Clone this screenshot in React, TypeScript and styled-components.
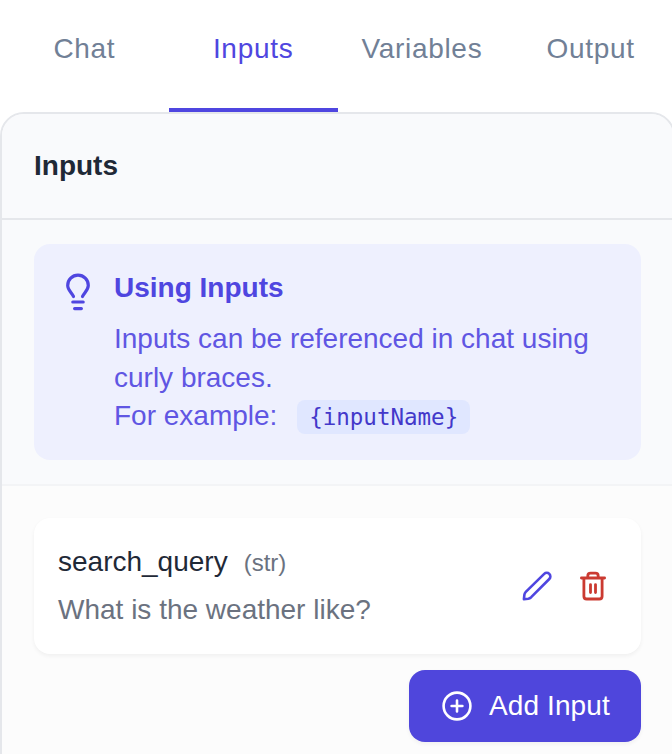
import React from "react";
import styled, { createGlobalStyle } from "styled-components";

const GlobalStyle = createGlobalStyle`
  *, *::before, *::after { box-sizing: border-box; }
  html, body { margin: 0; padding: 0; height: 100%; overflow: hidden; background: #fff; }
  body { font-family: "Liberation Sans", Arial, sans-serif; font-size: 28px; }
`;

const Page = styled.div`
  display: flex;
  flex-direction: column;
  width: 675px;
  height: 754px;
  overflow: hidden;
`;

const TabBar = styled.nav`
  display: grid;
  grid-template-columns: repeat(4, 168.75px);
  height: 112px;
  flex: none;
`;

const Tab = styled.button<{ $active?: boolean }>`
  border: 0;
  border-bottom: 4px solid ${(p) => (p.$active ? "#4f46e0" : "transparent")};
  padding: 0 0 10px;
  background: transparent;
  font: inherit;
  line-height: 40px;
  letter-spacing: 0.7px;
  color: ${(p) => (p.$active ? "#4f46e0" : "#718096")};
`;

const Panel = styled.section`
  flex: none;
  height: 700px;
  border: 2px solid #e5e7eb;
  border-radius: 24px;
  background: #fcfcfc;
  overflow: hidden;
`;

const PanelHeader = styled.header`
  display: flex;
  align-items: center;
  height: 106px;
  padding: 0 32px;
  border-bottom: 2px solid #e5e7eb;
  background: #f9fafc;
`;

const PanelTitle = styled.h2`
  margin: 0;
  font-size: 28px;
  line-height: 40px;
  font-weight: 700;
  color: #1f2937;
`;

const HintArea = styled.div`
  padding: 24px 32px;
  border-bottom: 2px solid #f3f4f6;
  background: #f9fafc;
`;

const Hint = styled.div`
  display: flex;
  gap: 16px;
  height: 216px;
  padding: 24px;
  border-radius: 16px;
  background: #eef0fe;
`;

const HintIcon = styled.svg`
  flex: none;
  width: 40px;
  height: 48px;
`;

const HintTitle = styled.h3`
  margin: 0 0 12px;
  font-size: 28px;
  line-height: 40px;
  font-weight: 700;
  color: #4f46e0;
`;

const HintText = styled.p`
  margin: 0;
  font-size: 28px;
  line-height: 38.5px;
  color: #6056e3;
`;

const Code = styled.code`
  display: inline-block;
  height: 34px;
  margin-left: 12px;
  padding: 0 12px;
  border-radius: 8px;
  background: #e0e7ff;
  font-family: "DejaVu Sans Mono", monospace;
  font-size: 22.5px;
  line-height: 34px;
  color: #4338ca;
`;

const List = styled.div`
  display: flex;
  flex-direction: column;
  align-items: flex-end;
  gap: 16px;
  padding: 32px;
`;

const Card = styled.article`
  display: flex;
  align-items: center;
  justify-content: space-between;
  width: 100%;
  height: 136px;
  padding: 0 32px 0 24px;
  border-radius: 16px;
  background: #fff;
  box-shadow: 0 2px 4px rgba(0, 0, 0, 0.05);
`;

const NameRow = styled.div`
  display: flex;
  align-items: baseline;
  gap: 16px;
  line-height: 40px;
  margin-bottom: 8px;
`;

const Name = styled.span`
  color: #1f2937;
`;

const TypeLabel = styled.span`
  font-size: 24px;
  color: #6b7280;
`;

const Value = styled.div`
  line-height: 38px;
  padding-bottom: 2px;
  color: #6b7280;
`;

const Actions = styled.div`
  display: flex;
  gap: 24px;
`;

const IconButton = styled.button<{ $danger?: boolean }>`
  display: flex;
  border: 0;
  padding: 0;
  background: transparent;
  color: ${(p) => (p.$danger ? "#cb3a31" : "#4f46e0")};
`;

const AddButton = styled.button`
  display: flex;
  align-items: center;
  gap: 16px;
  width: 232px;
  height: 72px;
  padding: 0 0 0 32px;
  border: 0;
  border-radius: 16px;
  background: #4f46dc;
  color: #fff;
  font: inherit;
  letter-spacing: 0.1px;
  box-shadow: 0 2px 4px rgba(0, 0, 0, 0.05);
`;

const stroke = {
  fill: "none",
  stroke: "currentColor",
  strokeLinecap: "round" as const,
  strokeLinejoin: "round" as const,
};

const PencilIcon = () => (
  <svg width="32" height="32" viewBox="0 0 32 32" {...stroke} strokeWidth="2.6">
    <path d="M2.9 29.1 3.4 24.6Q3.6 23 4.8 21.8L23.2 3.9a3.6 3.6 0 0 1 5.1 5.1L10.2 27.2Q8.8 28.5 7.2 28.7Z" />
  </svg>
);

const TrashIcon = () => (
  <svg width="32" height="32" viewBox="0 0 32 32" {...stroke} strokeWidth="2.8">
    <path d="M4.4 8h23.2M10.8 8V6q0-2.8 2.8-2.8h4.8q2.8 0 2.8 2.8V8M6.9 8v18.2q0 2.8 2.8 2.8h12.6q2.8 0 2.8-2.8V8M13.5 14.6v8M18.5 14.6v8" />
  </svg>
);

const PlusCircleIcon = () => (
  <svg width="32" height="32" viewBox="0 0 32 32" {...stroke} strokeWidth="2.6">
    <circle cx="16" cy="16" r="13.4" />
    <path d="M10.6 16h10.8M16 10.6v10.8" />
  </svg>
);

const tabs = ["Chat", "Inputs", "Variables", "Output"];

export default function App() {
  return (
    <>
      <GlobalStyle />
      <Page>
        <TabBar>
          {tabs.map((tab) => (
            <Tab key={tab} $active={tab === "Inputs"}>{tab}</Tab>
          ))}
        </TabBar>
        <Panel>
          <PanelHeader>
            <PanelTitle>Inputs</PanelTitle>
          </PanelHeader>
          <HintArea>
            <Hint>
              <HintIcon viewBox="0 0 40 48" {...stroke} stroke="#4f46e0" strokeWidth="3.2">
                <path d="M15.5 28.6C14.4 25.2 9.7 22.3 9.7 17.5a10.3 10.3 0 0 1 20.6 0C30.3 22.3 25.6 25.2 24.5 28.6M14.8 34h10.4M16.6 40.6h6.8" />
              </HintIcon>
              <div>
                <HintTitle>Using Inputs</HintTitle>
                <HintText>
                  Inputs can be referenced in chat using
                  <br />
                  curly braces.
                  <br />
                  For example: <Code>{"{inputName}"}</Code>
                </HintText>
              </div>
            </Hint>
          </HintArea>
          <List>
            <Card>
              <div>
                <NameRow>
                  <Name>search_query</Name>
                  <TypeLabel>(str)</TypeLabel>
                </NameRow>
                <Value>What is the weather like?</Value>
              </div>
              <Actions>
                <IconButton aria-label="Edit"><PencilIcon /></IconButton>
                <IconButton $danger aria-label="Delete"><TrashIcon /></IconButton>
              </Actions>
            </Card>
            <AddButton>
              <PlusCircleIcon />
              Add Input
            </AddButton>
          </List>
        </Panel>
      </Page>
    </>
  );
}
